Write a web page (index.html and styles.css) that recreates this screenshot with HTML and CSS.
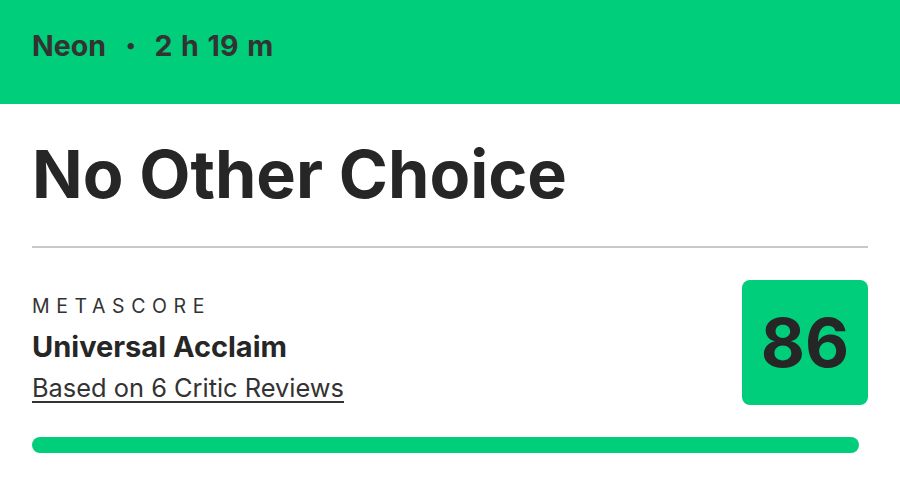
FILE: index.html
```html
<!DOCTYPE html>
<html lang="en">
<head>
    <meta charset="UTF-8">
    <title>No Other Choice</title>
    <link rel="stylesheet" href="styles.css">
</head>
<body>
    <div class="header">
        <span class="studio">Neon</span>
        <span class="dot">&bull;</span>
        <span class="runtime">2 h 19 m</span>
    </div>
    <div class="main">
        <h1 class="title">No Other Choice</h1>
        <div class="score-row">
            <div class="score-info">
                <div class="label">METASCORE</div>
                <div class="verdict">Universal Acclaim</div>
                <a href="javascript:;" class="reviews">Based on 6 Critic Reviews</a>
            </div>
            <div class="score-box">86</div>
        </div>
        <div class="bar"></div>
    </div>
</body>
</html>
```
FILE: styles.css
```css
*{
    margin:0; padding:0;
}
body {
    font-family: Inter, "Liberation Sans", sans-serif; color: #262626; background: #fff;
}
.header {
    height: 104px; background: #00ce7a; display: flex; align-items: center; padding: 0 32px 14px; box-sizing: border-box;
    font-size: 28.5px; font-weight: 700; color: #333;
}
.dot { margin: 0 19px 0 20px; font-size: 20px; }
.runtime { word-spacing: 2px; }
.main { padding: 0 32px; }
.title {
    font-size: 66.5px; font-weight: 700; line-height: 1; padding: 37px 0 38px; border-bottom: 2px solid #c9c9c9;
}
.score-row {
    display: flex; justify-content: space-between; align-items: flex-start; padding-top: 32px;
}
.label { font-size: 19.5px; letter-spacing: 6.6px; color: #333; margin-top: 14px; line-height: 24px; }
.verdict { font-size: 29px; font-weight: 700; margin-top: 11px; line-height: 36px; }
.reviews {
    display: inline-block; font-size: 25.4px; color: #333; line-height: 34px; margin-top: 6px;
    text-decoration: underline; text-decoration-thickness: 2px; text-underline-offset: 4px;
}
.score-box {
    width: 126px; height: 125px; border-radius: 8px; background: #00ce7a;
    display: flex; align-items: center; justify-content: center;
    font-size: 68px; font-weight: 700; color: #262626;
}
.bar { height: 16px; border-radius: 8px; background: #00ce7a; margin: 32px 9px 0 0; }
```
